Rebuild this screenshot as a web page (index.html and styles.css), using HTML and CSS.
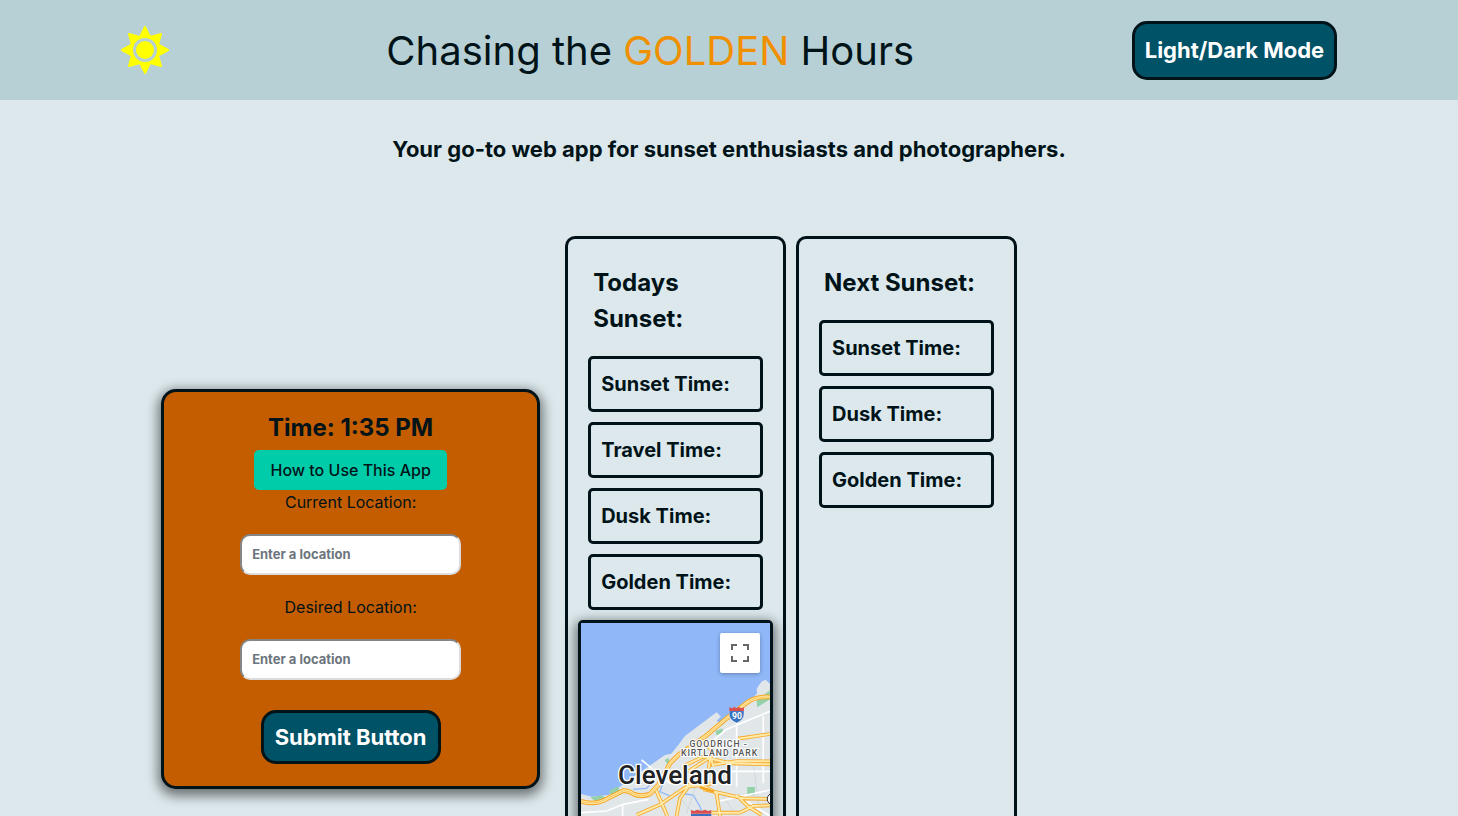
FILE: index.html
```html
<!DOCTYPE html>
<html lang="en">
<head>
<meta charset="utf-8">
<meta name="viewport" content="width=device-width, initial-scale=1">
<title>Chasing the Golden Hours</title>
<link rel="stylesheet" href="styles.css">
</head>
<body>
<header class="header">
  <svg class="sun" viewBox="0 0 48 48" aria-hidden="true">
    <path d="M24 1 L29 11 L40 8 L37 18.500 L47 24 L37 29.500 L40 40 L29 37 L24 47 L19 37 L8 40 L11 29.500 L1 24 L11 18.500 L8 8 L19 11 Z" fill="#ff0" stroke="#ff0" stroke-width="2" stroke-linejoin="round"/>
    <circle cx="24" cy="24" r="10.500" fill="#ff0" stroke="#b7d0d5" stroke-width="3"/>
  </svg>
  <h1 class="title">Chasing the <span class="golden">GOLDEN</span> Hours</h1>
  <button class="button button-mode" type="button">Light/Dark Mode</button>
</header>
<h2 class="tagline">Your go-to web app for sunset enthusiasts and photographers.</h2>
<main class="main">
  <form class="search">
    <p class="clock">Time: 1:35 PM</p>
    <button class="help" type="button">How to Use This App</button>
    <label class="label" for="current">Current Location:</label>
    <input class="input" id="current" type="text" placeholder="Enter a location">
    <label class="label" for="desired">Desired Location:</label>
    <input class="input" id="desired" type="text" placeholder="Enter a location">
    <button class="button button-submit" type="submit">Submit Button</button>
  </form>
  <section class="panel panel-today">
    <h3 class="panel-title">Todays Sunset:</h3>
    <p class="time">Sunset Time:</p>
    <p class="time">Travel Time:</p>
    <p class="time">Dusk Time:</p>
    <p class="time">Golden Time:</p>
    <div class="map">
      <svg class="map-canvas" viewBox="33 39 567 882" preserveAspectRatio="xMidYMin slice" role="img" aria-label="Map of Cleveland">
        <rect x="33" y="39" width="567" height="882" fill="#90b8f8"/>
        <path d="M33 552 L66 560 L115 555 L150 530 L180 508 L235 470 L285 435 L304 431 L325 405 L345 378 L440 307 L453 320 L440 332 L457 346 L480 322 L530 282 L562 250 L560 238 Q575 208 588 210 L600 222 V921 H33 Z" fill="#e1e6e9"/>
        <path d="M560 272 L600 241 V268 L562 292 Z M62 562 L95 556 L116 568 L80 578 Z M118 542 L145 529 L148 542 L122 555 Z M284 450 L296 444 L302 463 L290 460 Z M532 531 H555 V556 H532 Z M437 363 L458 355 V370 L440 376 Z" fill="#94d0a8"/>
        <path d="M190 538 L230 535 L262 500 L280 515 L270 545 L300 558 M345 552 L370 555 L390 590 L398 610" fill="none" stroke="#90b8f8" stroke-width="4"/>
        <path d="M380 520 L350 610 M310 540 L370 610 M450 545 L500 618 M230 470 L250 500 M545 415 L570 618 M440 400 L465 450" stroke="#c9d1d8" fill="none" stroke-width="2"/>
        <g fill="none" stroke="#fff" stroke-width="5">
          <path d="M33 608 L110 603 L160 583 L236 568 M158 583 V618 M390 424 L470 358 L600 304 M580 318 V520 M500 330 V530 M465 484 H600 M510 560 L600 618 M440 575 L600 540 M215 450 L300 520 L350 500"/>
        </g>
        <path d="M33 574 Q70 585 100 572 L160 542 Q178 542 190 552 Q215 562 240 552 L265 525 L300 460 L325 435 L405 380 L470 325 L535 275 Q560 259 600 261" fill="none" stroke="#f5a623" stroke-width="14"/>
        <path d="M33 574 Q70 585 100 572 L160 542 Q178 542 190 552 Q215 562 240 552 L265 525 L300 460 L325 435 L405 380 L470 325 L535 275 Q560 259 600 261" fill="none" stroke="#ffe9a8" stroke-width="8"/>
        <path d="M33 574 Q70 585 100 572 L160 542 Q178 542 190 552 Q215 562 240 552 L265 525 L300 460 L325 435 L405 380 L470 325 L535 275 Q560 259 600 261" fill="none" stroke="#f5b640" stroke-width="2"/>
        <path d="M200 615 L270 584 L335 540 L365 520 L405 530 L440 550 L450 618 M320 618 L330 565 L355 530 L430 520 M258 540 L292 618 M345 466 L400 440 L480 460 L600 463 M430 464 L500 453 L600 454 M400 538 L520 565 L600 567 M425 608 L510 608 L550 588 L600 586 M500 556 L535 590 L575 615 M505 386 L600 372 M420 430 L430 470 M395 390 L425 420 L415 480 M330 500 L420 442" fill="none" stroke="#f5a623" stroke-width="11"/>
        <path d="M200 615 L270 584 L335 540 L365 520 L405 530 L440 550 L450 618 M320 618 L330 565 L355 530 L430 520 M258 540 L292 618 M345 466 L400 440 L480 460 L600 463 M430 464 L500 453 L600 454 M400 538 L520 565 L600 567 M425 608 L510 608 L550 588 L600 586 M500 556 L535 590 L575 615 M505 386 L600 372 M420 430 L430 470 M395 390 L425 420 L415 480 M330 500 L420 442" fill="none" stroke="#ffe9a8" stroke-width="6"/>
        <path d="M390 532 L432 545" stroke="#f5a623" stroke-width="8"/>
        <circle cx="609" cy="567" r="17" fill="#fff" stroke="#333" stroke-width="3"/>
        <path d="M478 302 H522 V312 Q522 330 500 339 Q478 330 478 312 Z" fill="#3871c2" stroke="#fff" stroke-width="1"/>
        <path d="M478 303 V292 L486 295 L493 291 L500 295 L507 291 L514 295 L522 292 V303 Z" fill="#d94f4f"/>
        <text class="map-shield" x="501" y="327">90</text>
        <path d="M363 612 H424 V650 L394 675 L363 650 Z" fill="#3871c2"/>
        <path d="M363 611 V600 L372 603 L383 599 L394 603 L405 599 L415 603 L424 600 V611 Z" fill="#d94f4f"/>
        <text class="map-area" x="446" y="411">GOODRICH -</text>
        <text class="map-area" x="449" y="438">KIRTLAND PARK</text>
        <text class="map-city" x="315" y="521">Cleveland</text>
      </svg>
      <button class="fullscreen" type="button" aria-label="Toggle fullscreen view">
        <svg viewBox="0 0 18 18" class="fullscreen-icon"><path d="M0 0H6V2H2V6H0Z M12 0H18V6H16V2H12Z M0 12H2V16H6V18H0Z M16 12H18V18H12V16H16Z" fill="#666"/></svg>
      </button>
    </div>
  </section>
  <section class="panel panel-next">
    <h3 class="panel-title">Next Sunset:</h3>
    <p class="time">Sunset Time:</p>
    <p class="time">Dusk Time:</p>
    <p class="time">Golden Time:</p>
  </section>
</main>
</body>
</html>
```
FILE: styles.css
```css
* { box-sizing: border-box; }
body {
  margin: 0;
  background: #dce8ec;
  color: #001318;
  font: 16px/24px Inter, "Open Sans", sans-serif;
}
h1, h2, h3, p { margin: 0; }
button, input { font-family: inherit; color: inherit; }

.header {
  display: flex;
  align-items: center;
  justify-content: space-around;
  min-height: 100px;
  padding: 0 12px;
  background: #b7d0d5;
}
.sun { width: 48px; height: 48px; }
.title { padding-top: 2px; font-size: 40px; line-height: 60px; font-weight: 400; }
.golden { color: #f09000; }

.button {
  border: 3px solid #001318;
  border-radius: 15px;
  background: #005266;
  color: #fff;
  font-size: 22px;
  line-height: 28px;
  font-weight: 700;
  padding: 10px;
}
.button-mode { padding: 12px 10px 13px; }
.tagline {
  padding: 33px 16px 70px;
  text-align: center;
  font-size: 22px;
  line-height: 33px;
  font-weight: 700;
}

.main { display: flex; align-items: center; }
.search {
  display: flex;
  flex-direction: column;
  align-items: center;
  width: 26%;
  margin: 0 25px 0 11.05%;
  padding: 18px 20px 22px;
  border: 3px solid #001318;
  border-radius: 15px;
  background: #c45c00;
  box-shadow: 0 4px 12px 3px rgba(0, 0, 0, 0.5);
}
.clock { margin-bottom: 4px; font-size: 24px; line-height: 36px; font-weight: 700; }
.help {
  border: 0;
  border-radius: 5px;
  padding: 8px 16px;
  background: #00ccaa;
  font-size: 16px;
  line-height: 24px;
  font-weight: 500;
}
.input {
  width: 60%;
  min-width: 221px;
  height: 41px;
  margin: 20px 0;
  padding: 9px 10px 10px;
  border: 2px solid;
  border-color: #858585 #dcdcdc #dcdcdc #858585;
  border-radius: 10px;
  background: #fff;
  font-size: 13px;
  font-weight: 700;
}
.input::placeholder { color: #6c757d; opacity: 1; }
.button-submit { margin-top: 10px; padding: 10px 11px; }

.panel {
  align-self: stretch;
  width: 15.15%;
  margin-right: 10px;
  padding: 26px 10px 19px;
  border: 3px solid #001318;
  border-radius: 10px;
}
.panel-title { padding: 0 15px; margin-bottom: 19px; font-size: 24px; line-height: 36px; font-weight: 700; }
.time {
  margin: 0 10px 10px;
  padding: 10px;
  border: 3px solid #001318;
  border-radius: 5px;
  font-size: 20px;
  line-height: 30px;
  font-weight: 700;
}
.map {
  position: relative;
  height: 300px;
  border: 3px solid #001318;
  border-radius: 5px;
  background: #90b8f8;
  box-shadow: 0 4px 12px 3px rgba(0, 0, 0, 0.5);
}
.map-canvas { display: block; width: 100%; height: 100%; }
.map-area, .map-city, .map-shield { font-family: Roboto, sans-serif; text-anchor: middle; paint-order: stroke; }
.map-area { font-size: 26px; font-weight: 500; letter-spacing: 3px; fill: #555; stroke: #fff; stroke-width: 6px; }
.map-city { font-size: 78px; font-weight: 500; fill: #202124; stroke: #fff; stroke-width: 8px; }
.map-shield { font-size: 26px; font-weight: 700; fill: #fff; }
.fullscreen {
  position: absolute;
  top: 10px;
  right: 10px;
  display: grid;
  place-items: center;
  width: 40px;
  height: 40px;
  border: 0;
  border-radius: 2px;
  background: #fff;
  box-shadow: 0 1px 4px rgba(0, 0, 0, 0.3);
}
.fullscreen-icon { width: 18px; height: 18px; }
```
